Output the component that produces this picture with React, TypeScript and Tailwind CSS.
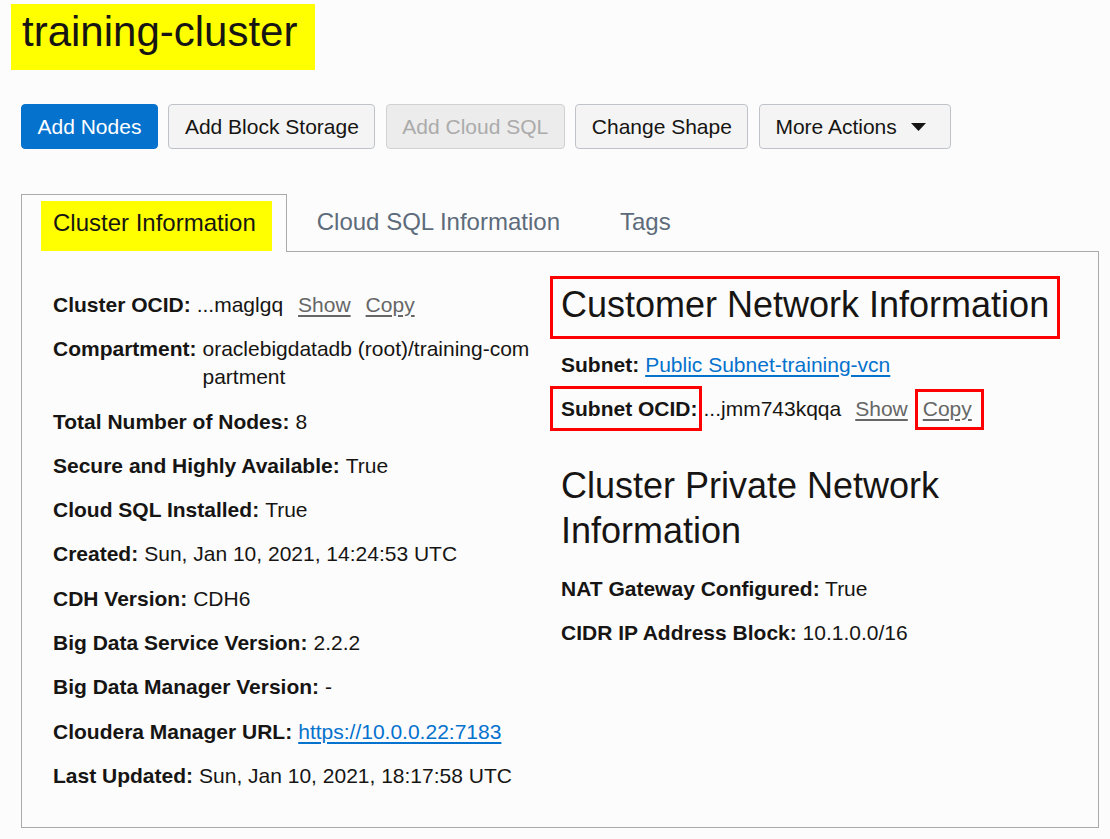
import React from "react"

const labelFont = "font-['Liberation_Sans',Arial,sans-serif]"

type Row = { label: string; value: React.ReactNode }

const leftRows: Row[] = [
  {
    label: "Cluster OCID:",
    value: (
      <span className="flex">
        <span>...maglgq</span>
        <a className="ml-[15px] text-[#666] underline underline-offset-[3px]">Show</a>
        <a className="ml-[15px] text-[#666] underline underline-offset-[3px]">Copy</a>
      </span>
    ),
  },
  { label: "Compartment:", value: "oraclebigdatadb (root)/training-compartment" },
  { label: "Total Number of Nodes:", value: "8" },
  { label: "Secure and Highly Available:", value: "True" },
  { label: "Cloud SQL Installed:", value: "True" },
  { label: "Created:", value: "Sun, Jan 10, 2021, 14:24:53 UTC" },
  { label: "CDH Version:", value: "CDH6" },
  { label: "Big Data Service Version:", value: "2.2.2" },
  { label: "Big Data Manager Version:", value: "-" },
  {
    label: "Cloudera Manager URL:",
    value: <a className="text-[#0572ce] underline underline-offset-[3px]">https://10.0.0.22:7183</a>,
  },
  { label: "Last Updated:", value: "Sun, Jan 10, 2021, 18:17:58 UTC" },
]

// red annotation frame drawn over content
function Frame({ className }: { className: string }) {
  return <span className={`pointer-events-none absolute border-[3px] border-[#ff0000] ${className}`} />
}

function InfoRow({ label, value }: Row) {
  return (
    <div className="flex">
      <span className="whitespace-nowrap font-bold">{label}</span>
      <span className="ml-[6px] min-w-0 break-all">{value}</span>
    </div>
  )
}

export default function App() {
  return (
    <div className={`min-h-screen bg-[#fcfcfc] pb-[11px] pl-[21px] pr-[11px] pt-[4px] text-[#161513] ${labelFont}`}>
      {/* Title */}
      <div className="flex">
        <h1 className="-ml-[10px] bg-[#ffff00] pb-[13px] pl-[11px] pr-[18px] pt-[3px] text-[42px] font-normal leading-[50px]">
          training-cluster
        </h1>
      </div>

      {/* Action buttons */}
      <div className="mt-[34px] flex gap-[10.5px] text-[21px]">
        <button className="h-[45px] rounded-[4px] border border-[#0572ce] bg-[#0572ce] px-[15.5px] text-white">Add Nodes</button>
        <button className="h-[45px] rounded-[4px] border border-[#bfc3c8] bg-[#f4f4f4] px-[15.5px]">Add Block Storage</button>
        <button className="h-[45px] rounded-[4px] border border-[#cfd1d3] bg-[#ececec] px-[15.5px] text-[#ababab]">Add Cloud SQL</button>
        <button className="h-[45px] rounded-[4px] border border-[#bfc3c8] bg-[#f4f4f4] px-[15.5px]">Change Shape</button>
        <button className="flex h-[45px] items-center rounded-[4px] border border-[#bfc3c8] bg-[#f4f4f4] pl-[15.5px] pr-[24px]">
          More Actions
          <svg className="ml-[14px]" width="15" height="8" viewBox="0 0 15 8">
            <path d="M0 0h15L7.5 8z" fill="#161513" />
          </svg>
        </button>
      </div>

      {/* Tabs */}
      <div className="mt-[44px]">
        <div className="flex items-end text-[24px]">
          <div className="relative z-10 -mb-px border-x border-t border-[#aaa] bg-[#fcfcfc] pb-px pl-[19px] pr-[14px] pt-[6px]">
            <span className="block bg-[#ffff00] pb-[6px] pl-3 pr-4 leading-[44px]">Cluster Information</span>
          </div>
          <div className="px-[30px] pb-px pt-[7px] text-[#5d6b7b]">
            <span className="block pb-[6px] leading-[44px]">Cloud SQL Information</span>
          </div>
          <div className="px-[30px] pb-px pt-[7px] text-[#5d6b7b]">
            <span className="block pb-[6px] leading-[44px]">Tags</span>
          </div>
        </div>

        {/* Panel */}
        <div className="grid grid-cols-[508px_1fr] border border-[#aaa] pb-[37px] pl-[31px] pr-[31px] pt-[39px] text-[21px] leading-[28px]">
          <div className="flex flex-col gap-[16.3px] pr-[26px]">
            {leftRows.map((r) => (
              <InfoRow key={r.label} label={r.label} value={r.value} />
            ))}
          </div>

          <div>
            <h2 className="-mt-[9px] text-[36px] font-normal leading-[45px]">
              <span className="relative inline-block">
                Customer Network Information
                <Frame className="-bottom-[12px] -left-[11px] -right-[11px] -top-[6px]" />
              </span>
            </h2>

            <div className="mt-[24px] flex">
              <span className="font-bold">Subnet:</span>
              <a className="ml-[6px] text-[#0572ce] underline underline-offset-[3px]">Public Subnet-training-vcn</a>
            </div>

            <div className="mt-4 flex">
              <span className="relative font-bold">
                Subnet OCID:
                <Frame className="-bottom-[8px] -left-[11px] -right-[4px] -top-[9px]" />
              </span>
              <span className="ml-[6px]">...jmm743kqqa</span>
              <a className="ml-[14px] text-[#666] underline underline-offset-[3px]">Show</a>
              <a className="relative ml-[15px] text-[#666] underline underline-offset-[3px]">
                Copy
                <Frame className="-bottom-[7px] -left-[8px] -right-[12px] -top-[6px]" />
              </a>
            </div>

            <h2 className="mt-[40px] text-[36px] font-normal leading-[45px]">Cluster Private Network Information</h2>

            <div className="mt-[22px]">
              <span className="font-bold">NAT Gateway Configured:</span> True
            </div>
            <div className="mt-4">
              <span className="font-bold">CIDR IP Address Block:</span> 10.1.0.0/16
            </div>
          </div>
        </div>
      </div>
    </div>
  )
}
